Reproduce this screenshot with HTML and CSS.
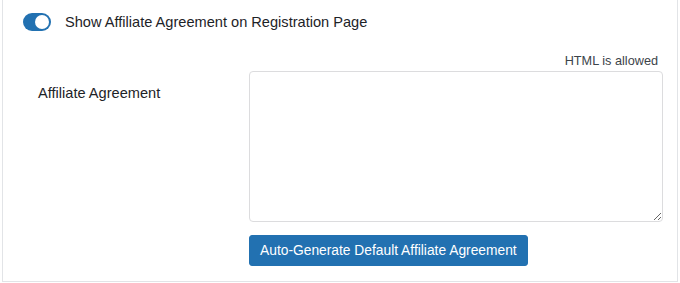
FILE: index.html
```html
<!DOCTYPE html>
<html lang="en">
<head>
    <meta charset="UTF-8">
    <meta name="viewport" content="width=device-width, initial-scale=1.0">
    <title>Affiliate Agreement</title>
    <link rel="stylesheet" href="styles.css">
</head>
<body>
    <div class="panel">
        <div class="toggle-row">
            <label class="switch">
                <input type="checkbox" checked>
                <span class="slider"></span>
            </label>
            <span class="toggle-label">Show Affiliate Agreement on Registration Page</span>
        </div>
        <div class="field-row">
            <label class="field-label" for="agreement">Affiliate Agreement</label>
            <div class="field">
                <div class="hint">HTML is allowed</div>
                <textarea id="agreement" name="agreement"></textarea>
                <button type="button" class="generate-btn">Auto-Generate Default Affiliate Agreement</button>
            </div>
        </div>
    </div>
</body>
</html>
```

FILE: styles.css
```css
body {
    font-family: 'Liberation Sans', Arial, sans-serif;
    font-size: 14.6px;
    color: #1d2327;
    margin: 0;
    padding: 0;
    background-color: #fff;
}

.panel {
    margin-left: 2px;
    width: 676px;
    height: 282px;
    box-sizing: border-box;
    border: 1px solid #e2e4e7;
    border-top: none;
}

.toggle-row {
    display: flex;
    align-items: center;
    gap: 14px;
    padding: 13px 0 0 20px;
}

.switch {
    position: relative;
    display: inline-block;
    width: 28px;
    height: 18px;
}

.switch input {
    display: none;
}

.slider {
    position: absolute;
    inset: 0;
    background-color: #2271b1;
    border-radius: 9px;
}

.slider::after {
    content: "";
    position: absolute;
    top: 2px;
    right: 2px;
    width: 14px;
    height: 14px;
    border-radius: 50%;
    background-color: #fff;
}

.toggle-label {
    line-height: 18px;
}

.field-row {
    display: grid;
    grid-template-columns: 246px 414px;
    margin-top: 22px;
}

.field-label {
    padding: 32px 0 0 35px;
    line-height: 17px;
}

.field {
    display: flex;
    flex-direction: column;
    align-items: flex-start;
}

.hint {
    align-self: stretch;
    text-align: right;
    font-size: 12.7px;
    line-height: 16px;
    color: #3c434a;
    padding-right: 5px;
    margin-bottom: 2px;
}

textarea {
    width: 414px;
    height: 151px;
    box-sizing: border-box;
    border: 1px solid #dcdcde;
    border-radius: 4px;
    font-family: inherit;
    font-size: 14px;
    margin: 0;
}

.generate-btn {
    margin-top: 13px;
    height: 31px;
    padding: 0 10px;
    background-color: #2271b1;
    border: 1px solid #2271b1;
    border-radius: 3px;
    color: #fff;
    font-family: inherit;
    font-size: 13.8px;
    cursor: pointer;
}

.generate-btn:hover {
    background-color: #135e96;
}
```
